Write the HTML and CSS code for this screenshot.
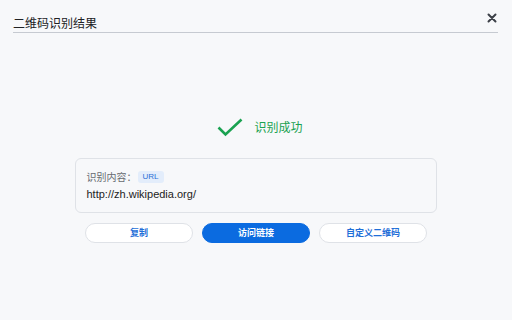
FILE: index.html
```html
<!DOCTYPE html>
<html lang="zh">
<head>
<meta charset="utf-8">
<link rel="stylesheet" href="styles.css">
</head>
<body>
<div class="page">
  <header class="header">
    <div class="title">二维码识别结果</div>
    <button class="close" aria-label="关闭">
      <svg width="10" height="10" viewBox="0 0 10 10"><path d="M1.5 1.5L8.5 8.5M8.5 1.5L1.5 8.5" stroke="#3c4047" stroke-width="2" stroke-linecap="round"/></svg>
    </button>
  </header>
  <main class="main">
    <div class="status">
      <svg class="check" width="26" height="19" viewBox="0 0 26 19"><path d="M1.5 9.5L8.5 16.5L24.5 1.5" fill="none" stroke="#1aa251" stroke-width="2.6"/></svg>
      <span class="status-text">识别成功</span>
    </div>
    <div class="card">
      <div class="card-head">
        <span class="label">识别内容：</span>
        <span class="badge">URL</span>
      </div>
      <div class="content">http://zh.wikipedia.org/</div>
    </div>
    <div class="actions">
      <button class="btn">复制</button>
      <button class="btn primary">访问链接</button>
      <button class="btn">自定义二维码</button>
    </div>
  </main>
</div>
</body>
</html>
```
FILE: styles.css
```css
* { box-sizing: border-box; }
html, body { margin: 0; padding: 0; }
body {
  width: 512px;
  height: 320px;
  background: #f7f8fa;
  font-family: "Noto Sans CJK SC", "Liberation Sans", sans-serif;
  color: #222;
  overflow: hidden;
}
.header {
  display: flex;
  justify-content: space-between;
  align-items: flex-start;
  margin: 0 14px 0 13px;
  height: 33px;
  border-bottom: 1px solid #c6cad1;
}
.title {
  font-size: 12px;
  line-height: 16px;
  padding-top: 15px;
  color: #202124;
}
.close {
  border: 0;
  background: none;
  padding: 0;
  margin-top: 13px;
  margin-right: 1px;
  width: 10px;
  height: 10px;
  display: flex;
}
.main {
  display: flex;
  flex-direction: column;
  align-items: center;
}
.status {
  display: flex;
  align-items: center;
  gap: 11px;
  margin-top: 85px;
  margin-left: 8px;
}
.status-text {
  font-size: 12px;
  color: #1aa251;
  line-height: 16px;
  margin-top: -1px;
}
.card {
  margin-top: 21px;
  width: 362px;
  height: 55px;
  border: 1px solid #dfe2e7;
  border-radius: 6px;
  background: #f7f8fa;
  padding: 11px 11px 0 11px;
  margin-left: -1px;
}
.card-head {
  display: flex;
  align-items: center;
  gap: 1px;
  height: 14px;
}
.label {
  font-size: 10px;
  color: #666a70;
  line-height: 14px;
}
.badge {
  font-family: "Liberation Sans", sans-serif;
  font-size: 8px;
  color: #2c6fd6;
  background: #e3edfb;
  border-radius: 3px;
  padding: 0 5px;
  line-height: 12px;
  height: 12px;
}
.content {
  font-family: "Liberation Sans", sans-serif;
  font-size: 11px;
  color: #222;
  margin-top: 3px;
  line-height: 14px;
}
.actions {
  display: flex;
  gap: 9px;
  margin-top: 10px;
}
.btn {
  width: 108px;
  height: 20px;
  border-radius: 10px;
  border: 1px solid #dfe2e7;
  background: #ffffff;
  color: #1f6fd8;
  font-family: "Noto Sans CJK SC", sans-serif;
  font-size: 9px;
  font-weight: 700;
  padding: 0;
  line-height: 18px;
}
.btn.primary {
  background: #0b6be0;
  border-color: #0b6be0;
  color: #ffffff;
}
```
